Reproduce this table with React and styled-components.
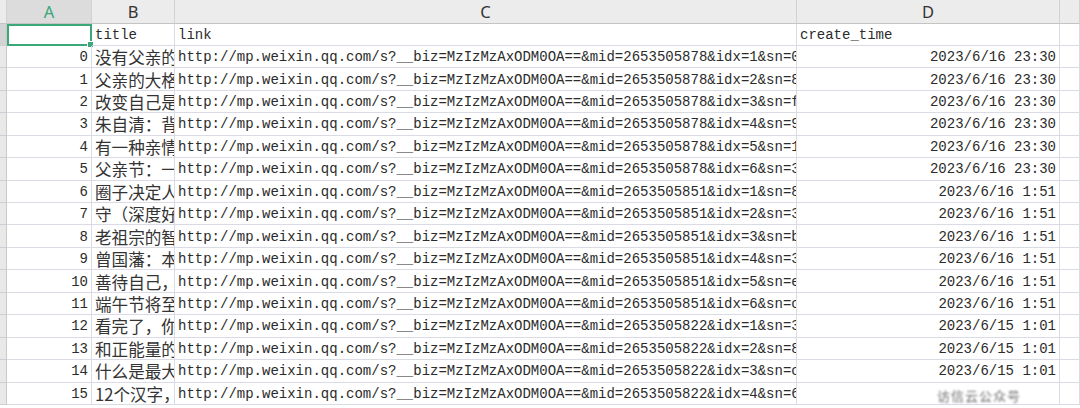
import React from "react";
import styled, { createGlobalStyle } from "styled-components";

const GlobalStyle = createGlobalStyle`
  html, body {
    margin: 0;
    padding: 0;
    background: #fff;
    overflow: hidden;
  }
`;

const Sheet = styled.div`
  display: grid;
  grid-template-columns: 7px 85px 83px 622px 263px 1fr;
  grid-template-rows: 23.5px;
  grid-auto-rows: 22.45px;
  width: 1080px;
  height: 408px;
  overflow: hidden;
  font-family: "Liberation Mono", "Noto Sans CJK SC", monospace;
  font-size: 14px;
  color: #2b2b2b;
`;

const ColHead = styled.div`
  display: flex;
  align-items: center;
  justify-content: center;
  background: ${(p) => (p.active ? "#dcdcdc" : "#ececec")};
  color: ${(p) => (p.active ? "#36a77a" : "#333")};
  border-right: 1px solid #d2d2d2;
  border-bottom: 1px solid #c4c4c4;
  font-family: "Noto Sans", "Liberation Sans", sans-serif;
  font-size: 16.5px;
  box-sizing: border-box;
`;

const RowHead = styled.div`
  background: ${(p) => (p.active ? "#d3d3d3" : "#e9e9e9")};
  border-right: 1px solid #c9c9c9;
  border-bottom: 1px solid #cfcfcf;
  box-sizing: border-box;
`;

const Cell = styled.div`
  position: relative;
  display: flex;
  align-items: center;
  justify-content: ${(p) => (p.right ? "flex-end" : "flex-start")};
  padding: 1px ${(p) => (p.right ? "3px" : "0")} 0 ${(p) => (p.right ? "0" : "3px")};
  border-right: 1px solid #d9dce4;
  border-bottom: 1px solid #d9dce4;
  box-sizing: border-box;
  overflow: hidden;
  white-space: nowrap;
  ${(p) =>
    p.selected &&
    `
    outline: 2px solid #3aa878;
    outline-offset: -2px;
    overflow: visible;
    &::after {
      content: "";
      position: absolute;
      right: -3px;
      bottom: -3px;
      width: 5px;
      height: 5px;
      background: #3aa878;
      border: 1px solid #fff;
    }
  `}
`;

const Title = styled.span`
  font-family: "Noto Sans CJK SC", sans-serif;
  font-size: 16.6px;
  color: #333;
`;

const Watermark = styled.span`
  position: absolute;
  left: 138px;
  top: 3px;
  padding: 0 2px;
  font-family: "Noto Sans CJK SC", sans-serif;
  font-size: 13px;
  color: #444;
  letter-spacing: 1px;
  filter: blur(0.9px);
  opacity: 0.8;
`;

const titles = [
  "没有父亲的日子",
  "父亲的大格局",
  "改变自己是一种能力",
  "朱自清：背影",
  "有一种亲情叫父爱",
  "父亲节：一封家书",
  "圈子决定人生",
  "守（深度好文）",
  "老祖宗的智慧",
  "曾国藩：本分",
  "善待自己，就是",
  "端午节将至",
  "看完了，你就懂了",
  "和正能量的人在一起",
  "什么是最大的福气",
  "12个汉字，道尽人生",
];

const sn = ["0a", "8c", "f1", "9d", "13", "3e", "8b", "3f", "b2", "3a", "e7", "c4", "3d", "8e", "c0", "6f"];

const mids = (i) => (i < 6 ? "2653505878" : i < 12 ? "2653505851" : "2653505822");
const idx = (i) => (i < 6 ? i + 1 : i < 12 ? i - 5 : i - 11);
const dates = (i) => (i < 6 ? "2023/6/16 23:30" : i < 12 ? "2023/6/16 1:51" : "2023/6/15 1:01");

const rows = titles.map((t, i) => ({
  n: i,
  title: t,
  link: `http://mp.weixin.qq.com/s?__biz=MzIzMzAxODM0OA==&mid=${mids(i)}&idx=${idx(i)}&sn=${sn[i]}7d2e91b04f`,
  time: i === 15 ? "" : dates(i),
}));

export default function App() {
  return (
    <>
      <GlobalStyle />
      <Sheet>
        <ColHead />
        <ColHead active>A</ColHead>
        <ColHead>B</ColHead>
        <ColHead>C</ColHead>
        <ColHead>D</ColHead>
        <ColHead />

        <RowHead active />
        <Cell selected />
        <Cell>title</Cell>
        <Cell>link</Cell>
        <Cell>create_time</Cell>
        <Cell />

        {rows.map((r) => (
          <React.Fragment key={r.n}>
            <RowHead />
            <Cell right>{r.n}</Cell>
            <Cell>
              <Title>{r.title}</Title>
            </Cell>
            <Cell>{r.link}</Cell>
            <Cell right>
              {r.time}
              {r.n === 15 && <Watermark>访信云公众号</Watermark>}
            </Cell>
            <Cell />
          </React.Fragment>
        ))}
      </Sheet>
    </>
  );
}
